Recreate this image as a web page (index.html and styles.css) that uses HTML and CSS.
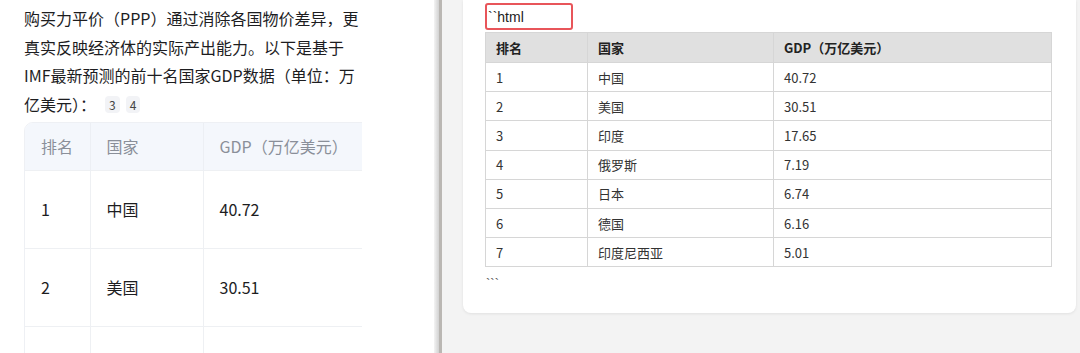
FILE: index.html
```html
<!DOCTYPE html>
<html lang="zh-CN">
<head>
<meta charset="utf-8">
<title>GDP PPP</title>
<link rel="stylesheet" href="styles.css">
</head>
<body>
<div class="page">
  <section class="left">
    <div class="chat">
      <p class="intro">购买力平价（PPP）通过消除各国物价差异，更真实反映经济体的实际产出能力。以下是基于IMF最新预测的前十名国家GDP数据（单位：万亿美元）：<span class="cites"><span class="cite">3</span><span class="cite">4</span></span></p>
      <div class="tbl-wrap">
        <table class="ltable">
          <colgroup><col class="lc1"><col class="lc2"><col class="lc3"></colgroup>
          <thead><tr><th>排名</th><th>国家</th><th>GDP（万亿美元）</th></tr></thead>
          <tbody>
            <tr><td>1</td><td>中国</td><td>40.72</td></tr>
            <tr><td>2</td><td>美国</td><td>30.51</td></tr>
            <tr><td></td><td></td><td></td></tr>
          </tbody>
        </table>
      </div>
    </div>
  </section>
  <div class="divider"><div class="shade"></div><div class="line"></div></div>
  <section class="right">
    <div class="card">
      <div class="codebox">``html</div>
      <table class="rtable">
        <colgroup><col class="rc1"><col class="rc2"><col class="rc3"></colgroup>
        <thead><tr><th>排名</th><th>国家</th><th>GDP（万亿美元）</th></tr></thead>
        <tbody>
          <tr><td>1</td><td>中国</td><td>40.72</td></tr>
          <tr><td>2</td><td>美国</td><td>30.51</td></tr>
          <tr><td>3</td><td>印度</td><td>17.65</td></tr>
          <tr><td>4</td><td>俄罗斯</td><td>7.19</td></tr>
          <tr><td>5</td><td>日本</td><td>6.74</td></tr>
          <tr><td>6</td><td>德国</td><td>6.16</td></tr>
          <tr><td>7</td><td>印度尼西亚</td><td>5.01</td></tr>
        </tbody>
      </table>
      <div class="fence">```</div>
    </div>
  </section>
</div>
</body>
</html>
```
FILE: styles.css
```css
* { box-sizing: border-box; }
html, body { margin: 0; padding: 0; }
body { width: 1080px; height: 353px; overflow: hidden; background: #f3f3f3; }
.page { display: flex; width: 1080px; height: 353px; }

.left { width: 436px; height: 353px; background: #ffffff; overflow: hidden; }
.chat { width: 362px; height: 353px; padding: 4px 0 0 24px; overflow: hidden; font-family: "Noto Sans CJK SC", "Noto Sans", sans-serif; color: #1d1d1f; }
.intro { margin: 0; width: 340px; font-size: 16px; line-height: 28.5px; }
.cites { display: inline-flex; gap: 6px; margin-left: 9px; vertical-align: 1px; }
.cite { display: inline-block; font-size: 12px; line-height: 17px; padding: 0 4px; background: #f2f3f6; border-radius: 4px; color: #444; }
.tbl-wrap { margin-top: 4px; width: 520px; border: 1px solid #eef0f4; border-radius: 9px 0 0 0; overflow: hidden; }
.ltable { border-collapse: collapse; table-layout: fixed; width: 520px; font-size: 16px; }
.lc1 { width: 65px; } .lc2 { width: 113px; } .lc3 { width: 342px; }
.ltable th { height: 47px; background: #f4f7fc; color: #8a8f99; font-weight: 400; text-align: left; padding: 0 0 0 16px; border-left: 1px solid #eceff4; }
.ltable td { height: 78px; padding: 0 0 0 16px; border-left: 1px solid #eef0f3; border-top: 1px solid #eef0f3; color: #1d1d1f; }
.ltable th:first-child, .ltable td:first-child { border-left: none; }

.divider { width: 8px; display: flex; }
.shade { width: 5px; background: linear-gradient(to right, #f4f4f4, #e2e2e2 50%, #d2d2d2); }
.line { width: 3px; background: #bab7b3; }

.right { flex: 1; padding: 0 4px 0 21px; }
.card { height: 313px; background: #ffffff; border-radius: 0 0 8px 8px; box-shadow: 0 1px 3px rgba(0,0,0,0.08); padding: 3px 24px 0 22px; font-family: "Noto Sans CJK SC", "Liberation Sans", sans-serif; color: #333; }
.codebox { width: 88px; height: 27px; border: 2px solid #e8555a; border-radius: 3px; padding: 1px 0 0 1px; font-family: "Liberation Sans", Arial, sans-serif; font-size: 14px; line-height: 23px; color: #222; }
.rtable { margin-top: 2px; width: 566px; border-collapse: collapse; table-layout: fixed; font-size: 13px; }
.rc1 { width: 102px; } .rc2 { width: 186px; } .rc3 { width: 278px; }
.rtable th, .rtable td { border: 1px solid #d6d6d6; text-align: left; padding: 0 0 0 10px; }
.rtable th { height: 30px; background: #e0e0e0; font-weight: 700; color: #222; }
.rtable td { height: 29.2px; color: #333; }
.fence { margin-top: 9px; font-family: "Liberation Sans", Arial, sans-serif; font-size: 13px; line-height: 16px; color: #555; padding-left: 1px; }
```
